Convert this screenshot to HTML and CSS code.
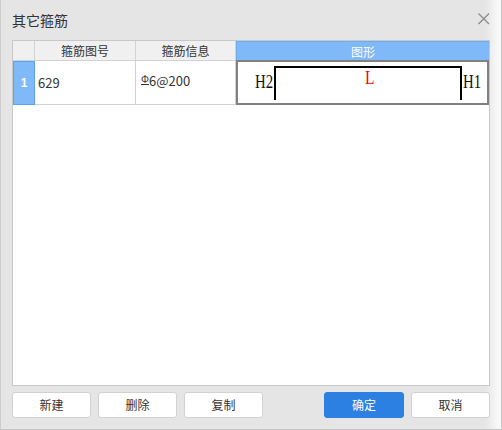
FILE: index.html
```html
<!DOCTYPE html>
<html>
<head>
<meta charset="utf-8">
<link rel="stylesheet" href="styles.css">
</head>
<body>
<div class="dialog">
  <div class="titlebar">
    <span class="title">其它箍筋</span>
    <svg class="close" width="12" height="12" viewBox="0 0 12 12"><path d="M0.5 0.5 L11 11 M11 0.5 L0.5 11" stroke="#8c8c8c" stroke-width="1.3" fill="none"/></svg>
  </div>
  <div class="table">
    <div class="cell rh head"></div>
    <div class="cell head">箍筋图号</div>
    <div class="cell head">箍筋信息</div>
    <div class="cell head sel">图形</div>
    <div class="cell rh num">1</div>
    <div class="cell data">629</div>
    <div class="cell data info"><span class="sym">Φ</span>6@200</div>
    <div class="cell shape">
      <svg class="bracket" width="250" height="41" viewBox="0 0 250 41"><path d="M37 38 V5 H223 V38" stroke="#000" stroke-width="2" fill="none"/></svg>
      <span class="lbl h2">H2</span>
      <span class="lbl len">L</span>
      <span class="lbl h1">H1</span>
    </div>
  </div>
  <div class="buttons">
    <button class="btn">新建</button>
    <button class="btn">删除</button>
    <button class="btn">复制</button>
    <span class="spacer"></span>
    <button class="btn primary">确定</button>
    <button class="btn">取消</button>
  </div>
</div>
</body>
</html>
```

FILE: styles.css
```css
* { box-sizing: border-box; }
html, body { margin: 0; padding: 0; }
body {
  width: 502px;
  height: 430px;
  font-family: "Noto Sans CJK SC", "Noto Sans", sans-serif;
  color: #333;
}
.dialog {
  width: 502px;
  height: 430px;
  background: linear-gradient(to right, #e5e5e5 0, #e5e5e5 484px, #f7f7f7 496px, #f9f9f9 500px);
  border-left: 1px solid #cdcdcd;
  border-right: 1px solid #c6c6c6;
  border-bottom: 1px solid #c6c6c6;
  display: flex;
  flex-direction: column;
}
.titlebar {
  height: 40px;
  display: flex;
  align-items: center;
  padding-left: 11px;
  padding-right: 12px;
}
.title {
  font-size: 14px;
  color: #333;
  flex: 1;
}
.close { display: block; position: relative; top: -1px; left: 1px; }

.table {
  margin-left: 11px;
  width: 478px;
  height: 346px;
  border: 1px solid #c8c8c8;
  background: #fff;
  display: grid;
  grid-template-columns: 22px 101px 100px 253px;
  grid-template-rows: 20px 44px;
  align-content: start;
}
.cell {
  border-right: 1px solid #d2d2d2;
  border-bottom: 1px solid #d2d2d2;
  font-size: 12px;
  display: flex;
  align-items: center;
}
.head {
  background: #f0f0f0;
  justify-content: center;
  line-height: 1;
  color: #333;
}
.head.sel {
  background: #80b9f8;
  color: #fff;
  border: 1px solid #6cadf6;
  border-right: none;
  border-bottom: none;
}
.rh.num {
  background: #80b9f8;
  border: 1px solid #5ea2ef;
  color: #fff;
  font-family: "Liberation Sans", Arial, sans-serif;
  font-weight: bold;
  font-size: 12px;
  justify-content: center;
}
.data {
  padding-left: 3px;
  font-size: 13px;
  color: #333;
}
.info {
  padding-left: 5px;
  padding-bottom: 4px;
}
.sym {
  display: inline-block;
  font-size: 10px;
  line-height: 9px;
  border-bottom: 1px solid #333;
  margin-right: 0;
  position: relative;
  top: -1px;
  font-family: "Liberation Sans", sans-serif;
}
.shape {
  position: relative;
  margin-top: -1px;
  height: 45px;
  border: 2px solid #818181;
}
.bracket {
  position: absolute;
  left: 0;
  top: 0;
}
.lbl {
  position: absolute;
  font-family: "Liberation Serif", "Times New Roman", serif;
  font-size: 19px;
  line-height: 1;
  color: #111;
  transform: scaleX(0.78);
  transform-origin: left top;
}
.h2 { left: 17px; top: 10px; }
.h1 { left: 225px; top: 10px; }
.len { left: 127px; top: 6px; color: #f00; transform: scaleX(0.82); }

.buttons {
  display: flex;
  gap: 7px;
  padding-left: 11px;
  margin-top: 6px;
  width: 489px;
}
.spacer { flex: 1; }
.btn {
  width: 79px;
  height: 26px;
  background: #fff;
  border: 1px solid #d2d2d2;
  border-radius: 3px;
  font-family: "Noto Sans CJK SC", "Noto Sans", sans-serif;
  font-size: 12px;
  color: #333;
  padding: 0;
  line-height: 1;
}
.btn.primary {
  width: 80px;
  background: #2b80e2;
  border-color: #2b80e2;
  color: #fff;
}
```
